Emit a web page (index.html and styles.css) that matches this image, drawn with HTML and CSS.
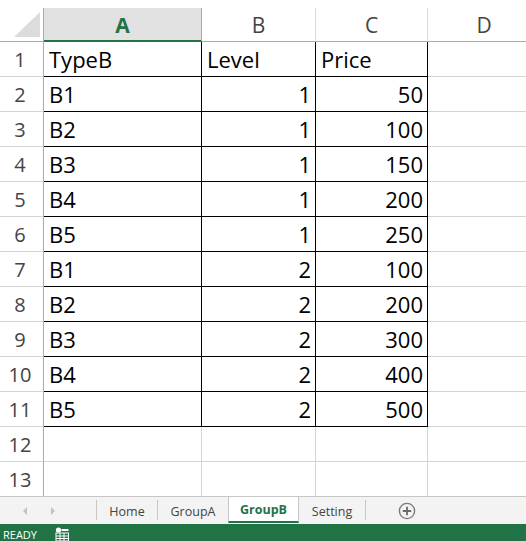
FILE: index.html
```html
<!DOCTYPE html>
<html>
<head>
<meta charset="utf-8">
<link rel="stylesheet" href="styles.css">
</head>
<body>
<div class="app">
  <div class="sheet">
    <div class="grid">
      <div class="corner"><svg width="43" height="33" viewBox="0 0 43 33"><polygon points="14,29 40,29 40,4" fill="#dcdcdc"/></svg></div>
      <div class="colhead sel">A</div>
      <div class="colhead">B</div>
      <div class="colhead">C</div>
      <div class="colhead last">D</div>

      <div class="rowhead">1</div><div class="cell b">TypeB</div><div class="cell b">Level</div><div class="cell b">Price</div><div class="cell g"></div>
      <div class="rowhead">2</div><div class="cell b">B1</div><div class="cell b num">1</div><div class="cell b num">50</div><div class="cell g"></div>
      <div class="rowhead">3</div><div class="cell b">B2</div><div class="cell b num">1</div><div class="cell b num">100</div><div class="cell g"></div>
      <div class="rowhead">4</div><div class="cell b">B3</div><div class="cell b num">1</div><div class="cell b num">150</div><div class="cell g"></div>
      <div class="rowhead">5</div><div class="cell b">B4</div><div class="cell b num">1</div><div class="cell b num">200</div><div class="cell g"></div>
      <div class="rowhead">6</div><div class="cell b">B5</div><div class="cell b num">1</div><div class="cell b num">250</div><div class="cell g"></div>
      <div class="rowhead">7</div><div class="cell b">B1</div><div class="cell b num">2</div><div class="cell b num">100</div><div class="cell g"></div>
      <div class="rowhead">8</div><div class="cell b">B2</div><div class="cell b num">2</div><div class="cell b num">200</div><div class="cell g"></div>
      <div class="rowhead">9</div><div class="cell b">B3</div><div class="cell b num">2</div><div class="cell b num">300</div><div class="cell g"></div>
      <div class="rowhead">10</div><div class="cell b">B4</div><div class="cell b num">2</div><div class="cell b num">400</div><div class="cell g"></div>
      <div class="rowhead">11</div><div class="cell b">B5</div><div class="cell b num">2</div><div class="cell b num">500</div><div class="cell g"></div>
      <div class="rowhead">12</div><div class="cell g"></div><div class="cell g"></div><div class="cell g"></div><div class="cell g"></div>
      <div class="rowhead">13</div><div class="cell g"></div><div class="cell g"></div><div class="cell g"></div><div class="cell g"></div>
    </div>
  </div>
  <div class="tabbar">
    <div class="navs">
      <svg width="96" height="27" viewBox="0 0 96 27"><polygon points="27,10 27,18 23,14" fill="#c3c3c3"/><polygon points="51,10 51,18 55,14" fill="#c3c3c3"/></svg>
    </div>
    <div class="sep"></div>
    <div class="tab t-home">Home</div>
    <div class="sep"></div>
    <div class="tab t-a">GroupA</div>
    <div class="tab active">GroupB</div>
    <div class="tab t-set">Setting</div>
    <div class="sep"></div>
    <div class="add"><svg width="18" height="18" viewBox="0 0 18 18"><circle cx="9" cy="9" r="7.6" fill="none" stroke="#7a7a7a" stroke-width="1.4"/><path d="M9 4.8v8.4M4.8 9h8.4" stroke="#6a6a6a" stroke-width="1.8"/></svg></div>
  </div>
  <div class="status">
    <span class="ready">READY</span>
    <svg class="macro" width="14" height="14" viewBox="0 0 14 14"><circle cx="3.5" cy="3" r="2.6" fill="#fff"/><rect x="6.5" y="2" width="7" height="2" fill="#fff"/><rect x="1" y="6" width="12.5" height="8" fill="none" stroke="#fff" stroke-width="1"/><path d="M1 9h12.5M1 11.5h12.5M5 6v8M9 6v8" stroke="#fff" stroke-width="1"/></svg>
  </div>
</div>
</body>
</html>
```

FILE: styles.css
```css
html, body {
  margin: 0;
  padding: 0;
  background: #fff;
}
.app {
  width: 526px;
  height: 541px;
  display: flex;
  flex-direction: column;
  overflow: hidden;
  font-family: "Open Sans", "Noto Sans", sans-serif;
}
.sheet {
  height: 496px;
  overflow: hidden;
  padding-top: 8px;
  box-sizing: border-box;
}
.grid {
  display: grid;
  grid-template-columns: 44px 158px 114px 112px 112px;
  grid-template-rows: 34px repeat(13, 35px);
}
.grid > div {
  box-sizing: border-box;
}
.corner {
  border-right: 1px solid #ababab;
  border-bottom: 1px solid #ababab;
  height: 34px;
}
.corner svg { display: block; }
.colhead {
  border-right: 1px solid #dadada;
  border-bottom: 1px solid #ababab;
  display: flex;
  align-items: center;
  justify-content: center;
  font-size: 21px;
  color: #444;
  padding-top: 1px;
}
.colhead.sel {
  background: #e1e1e1;
  color: #217346;
  font-weight: 700;
  border-bottom: 2px solid #217346;
  border-right: 1px solid #ababab;
}
.colhead.last { border-right: none; }
.rowhead {
  border-right: 1px solid #ababab;
  border-bottom: 1px solid #d4d4d4;
  display: flex;
  align-items: center;
  justify-content: center;
  font-size: 20px;
  color: #444;
  padding-right: 3px;
}
.cell {
  display: flex;
  align-items: flex-end;
  font-size: 22px;
  line-height: 28px;
  color: #000;
  padding: 0 4px 3px 5px;
  white-space: nowrap;
}
.cell.b {
  border-right: 1px solid #000;
  border-bottom: 1px solid #000;
}
.cell.g {
  border-right: 1px solid #d4d4d4;
  border-bottom: 1px solid #d4d4d4;
}
.cell.num { justify-content: flex-end; }

.tabbar {
  height: 28px;
  border-top: 1px solid #c6c6c6;
  background: #f3f3f3;
  box-sizing: border-box;
  display: flex;
  align-items: stretch;
  font-size: 12.5px;
  color: #444;
}
.navs { width: 96px; }
.navs svg { display: block; }
.sep {
  width: 1px;
  background: #c6c6c6;
  margin: 3px 0 4px;
}
.tab {
  display: flex;
  align-items: center;
  justify-content: center;
  padding-top: 1px;
  box-sizing: border-box;
}
.t-home { width: 60px; }
.t-a { width: 70px; }
.t-set { width: 66px; }
.tab.active {
  width: 71px;
  background: #fff;
  color: #217346;
  font-weight: 700;
  border-left: 1px solid #c6c6c6;
  border-right: 1px solid #c6c6c6;
  border-bottom: 2px solid #217346;
  padding-top: 1px;
  margin-bottom: 1px;
}
.add {
  display: flex;
  align-items: center;
  margin-left: 32px;
}
.add svg { display: block; }
.status {
  height: 17px;
  background: #217346;
  display: flex;
  align-items: center;
  color: #fff;
  font-size: 11px;
  padding-top: 3px;
  box-sizing: border-box;
}
.ready { margin-left: 3px; }
.macro { margin-left: 18px; margin-top: -1px; }
```
